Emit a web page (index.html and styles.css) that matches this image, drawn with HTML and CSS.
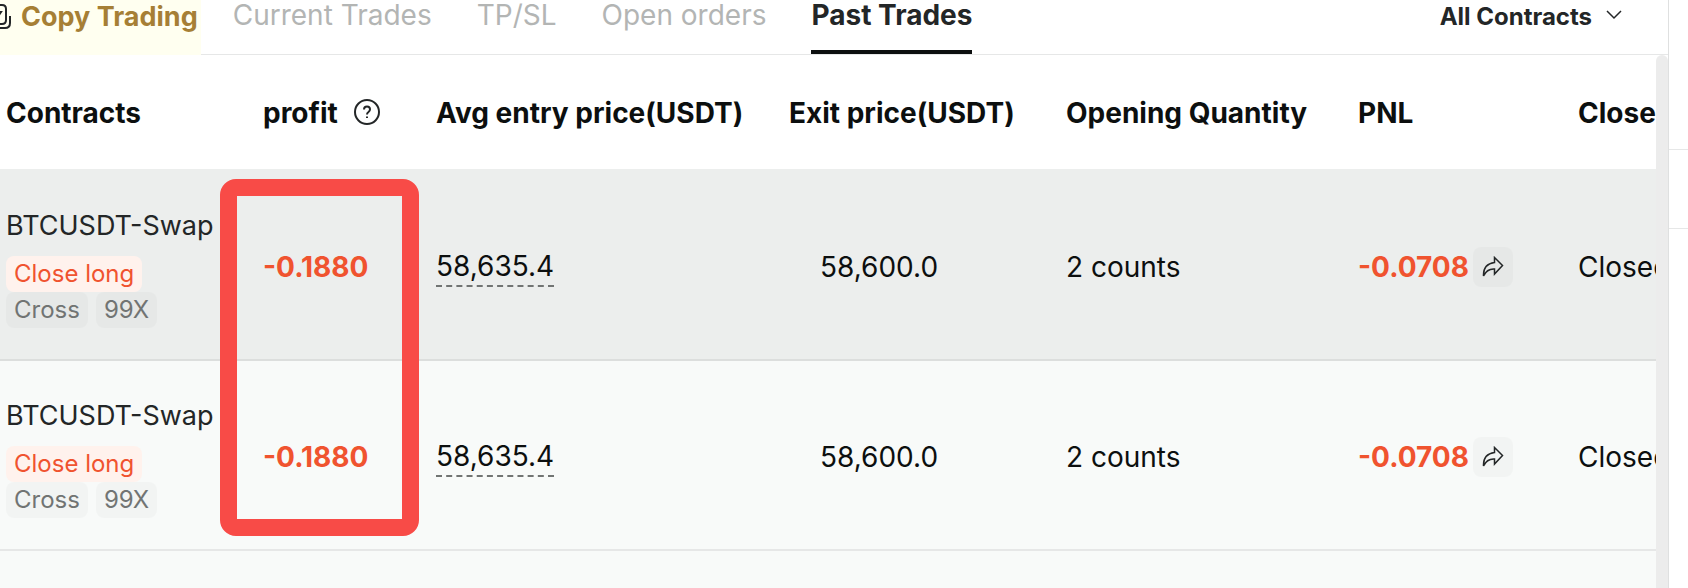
FILE: index.html
```
<!DOCTYPE html>
<html lang="en">
<head>
    <meta charset="UTF-8">
    <meta name="viewport" content="width=device-width, initial-scale=1.0">
    <title>Past Trades</title>
    <link rel="stylesheet" href="styles.css">
</head>
<body>
<div class="layout">
    <main class="panel">
        <nav class="tabs">
            <a class="tab copy" href="#copy">
                <svg class="copy-icon" width="12" height="28" viewBox="0 0 12 28">
                    <path d="M-6 1H2Q6 1 6 5V16Q6 20 2 20H-6M10 12V19Q10 24 5 24H-4M-6 8H1L-3 14" />
                </svg>
                Copy Trading
            </a>
            <a class="tab" href="#current">Current Trades</a>
            <a class="tab" href="#tpsl">TP/SL</a>
            <a class="tab" href="#open">Open orders</a>
            <a class="tab active" href="#past">Past Trades</a>
            <button class="filter" type="button">
                All Contracts
                <svg class="chevron" width="16" height="10" viewBox="0 0 16 10"><path d="M1 1L8 8L15 1" /></svg>
            </button>
        </nav>

        <div class="table-area">
            <table class="trades">
                <colgroup>
                    <col class="c-contract">
                    <col class="c-profit">
                    <col class="c-entry">
                    <col class="c-exit">
                    <col class="c-qty">
                    <col class="c-pnl">
                    <col class="c-close">
                </colgroup>
                <thead>
                    <tr>
                        <th>Contracts</th>
                        <th>
                            <span class="with-icon">profit
                                <svg class="help" width="26" height="28" viewBox="0 0 26 28">
                                    <circle cx="13" cy="13" r="12" />
                                    <path d="M10 10.5Q10 7.500 13 7.500Q16 7.500 16 10.300Q16 12 14.500 13Q13 14 13 15.500M13 17.500V19" />
                                </svg>
                            </span>
                        </th>
                        <th>Avg entry price(USDT)</th>
                        <th>Exit price(USDT)</th>
                        <th>Opening Quantity</th>
                        <th>PNL</th>
                        <th>Close</th>
                    </tr>
                </thead>
                <tbody>
                    <tr class="hovered">
                        <td>
                            <div class="symbol">BTCUSDT-Swap</div>
                            <div class="tags">
                                <span class="tag short">Close long</span>
                                <span class="tag">Cross</span>
                                <span class="tag">99X</span>
                            </div>
                        </td>
                        <td class="loss">-0.1880</td>
                        <td><span class="dashed">58,635.4</span></td>
                        <td class="exit">58,600.0</td>
                        <td>2 counts</td>
                        <td>
                            <span class="pnl">
                                <span class="loss">-0.0708</span>
                                <button class="share" type="button" aria-label="Share">
                                    <svg width="22" height="22" viewBox="0 0 22 22"><path d="M12.500 1.500L20.500 9.500L12.500 18V13Q5 12.500 1.500 20Q1 8 12.500 6.500Z" /></svg>
                                </button>
                            </span>
                        </td>
                        <td>Closed</td>
                    </tr>
                    <tr>
                        <td>
                            <div class="symbol">BTCUSDT-Swap</div>
                            <div class="tags">
                                <span class="tag short">Close long</span>
                                <span class="tag">Cross</span>
                                <span class="tag">99X</span>
                            </div>
                        </td>
                        <td class="loss">-0.1880</td>
                        <td><span class="dashed">58,635.4</span></td>
                        <td class="exit">58,600.0</td>
                        <td>2 counts</td>
                        <td>
                            <span class="pnl">
                                <span class="loss">-0.0708</span>
                                <button class="share" type="button" aria-label="Share">
                                    <svg width="22" height="22" viewBox="0 0 22 22"><path d="M12.500 1.500L20.500 9.500L12.500 18V13Q5 12.500 1.500 20Q1 8 12.500 6.500Z" /></svg>
                                </button>
                            </span>
                        </td>
                        <td>Closed</td>
                    </tr>
                </tbody>
            </table>
            <div class="highlight"></div>
            <div class="scrollbar"></div>
        </div>
    </main>
    <aside class="side">
        <div class="side-top"></div>
        <div class="side-row"></div>
    </aside>
</div>
</body>
</html>
```
FILE: styles.css
```
:root {
    --text: #0c0f0f;
    --text-soft: #232627;
    --muted: #b3b5b4;
    --line: #e6e7e7;
    --red: #f0532f;
    --row-bg: #f8faf9;
    --row-hover: #eceeed;
}

* {
    box-sizing: border-box;
}

body {
    margin: 0;
    font-family: Inter, "Liberation Sans", sans-serif;
    font-size: 28px;
    line-height: 40px;
    color: var(--text);
    background: #fff;
    overflow: hidden;
}

svg {
    fill: none;
    stroke: var(--text-soft);
    stroke-width: 1.5;
    flex: none;
}

button {
    font: inherit;
    color: inherit;
    border: none;
    padding: 0;
    cursor: pointer;
}

.layout {
    display: flex;
    height: 100vh;
}

.panel {
    flex: 1;
    min-width: 0;
    display: flex;
    flex-direction: column;
    border-right: 1px solid #dfe0e0;
}

/* tabs */
.tabs {
    display: flex;
    align-items: flex-start;
    height: 55px;
    border-bottom: 1px solid var(--line);
}

.tab {
    height: 54px;
    margin-right: 45px;
    line-height: 30px;
    color: var(--muted);
    text-decoration: none;
    white-space: nowrap;
}

.tab.active {
    color: var(--text-soft);
    font-weight: 700;
    border-bottom: 4px solid var(--text);
}

.tab.copy {
    display: flex;
    gap: 9px;
    height: 56px;
    margin-right: 32px;
    padding-right: 3px;
    font-size: 27px;
    line-height: 34px;
    font-weight: 700;
    color: #a67f35;
    background: #fffff0;
    border-bottom: 1px solid #ebead9;
}

.copy-icon {
    margin-top: 4px;
    stroke-width: 2;
}

.filter {
    display: flex;
    align-items: center;
    gap: 14px;
    margin-left: auto;
    margin-right: 46px;
    background: none;
    font-size: 24px;
    font-weight: 700;
    line-height: 34px;
    color: var(--text-soft);
}

.chevron {
    margin-bottom: 4px;
}

/* table */
.table-area {
    position: relative;
    flex: 1;
    min-height: 0;
    padding-right: 12px;
    overflow: hidden;
    background: var(--row-bg);
}

.trades {
    table-layout: fixed;
    width: 1860px;
    border-collapse: separate;
    border-spacing: 0;
}

.c-contract { width: 257px; }
.c-profit { width: 173px; }
.c-entry { width: 353px; }
.c-exit { width: 277px; }
.c-qty { width: 292px; }
.c-pnl { width: 220px; }

th {
    height: 116px;
    padding: 2px 0 0 6px;
    text-align: left;
    font-weight: 700;
    white-space: nowrap;
    background: #fff;
    border-bottom: 2px solid var(--row-hover);
}

td {
    height: 190px;
    padding: 3px 0 0 6px;
    white-space: nowrap;
    border-bottom: 2px solid var(--line);
}

.hovered td {
    background: var(--row-hover);
    border-color: #dcdedd;
}

.with-icon,
.pnl {
    display: flex;
    align-items: center;
    gap: 16px;
}

.help {
    stroke-width: 2;
}

.pnl {
    gap: 4px;
}

.symbol {
    margin-bottom: 10px;
    font-size: 27px;
    color: var(--text-soft);
}

.tags {
    display: flex;
    flex-wrap: wrap;
    column-gap: 8px;
    width: 208px;
}

.tag {
    padding: 0 8px;
    border-radius: 8px;
    font-size: 24px;
    line-height: 36px;
    color: #717473;
    background: rgba(0, 0, 0, 0.024);
}

.tag.short {
    color: var(--red);
    background: #fff2ed;
}

.loss {
    color: var(--red);
    font-weight: 700;
}

.dashed {
    display: inline-block;
    line-height: 38px;
    border-bottom: 2px dashed #717473;
}

td.exit {
    padding-left: 37px;
}

.share {
    display: flex;
    align-items: center;
    justify-content: center;
    width: 40px;
    height: 40px;
    border-radius: 8px;
    background: rgba(0, 0, 0, 0.024);
}

/* marker round the profit column */
.highlight {
    position: absolute;
    top: 124px;
    left: 220px;
    width: 199px;
    height: 357px;
    border: 17px solid #f84b47;
    border-radius: 16px;
}

.scrollbar {
    position: absolute;
    top: 0;
    right: 0;
    width: 12px;
    height: 100%;
    border-radius: 6px 6px 0 0;
    background: #ececec;
}

.side {
    width: 19px;
}

.side-top {
    height: 150px;
    border-bottom: 1px solid var(--line);
}

.side-row {
    height: 79px;
    border-bottom: 1px solid var(--line);
}
```
